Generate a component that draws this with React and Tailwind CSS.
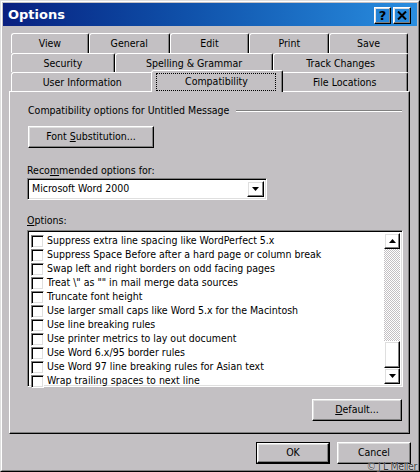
import React from 'react'

const raised =
  'border border-t-white border-l-white border-r-black border-b-black shadow-[inset_-1px_-1px_0_#808080,inset_1px_1px_0_#dfdfdf]'
const sunken =
  'border border-t-[#808080] border-l-[#808080] border-r-white border-b-white shadow-[inset_1px_1px_0_#000,inset_-1px_-1px_0_#dfdfdf]'

const row1 = [
  { label: 'View', w: 'w-[78px]' },
  { label: 'General', w: 'w-[81px]' },
  { label: 'Edit', w: 'w-[80px]' },
  { label: 'Print', w: 'w-[80px]' },
  { label: 'Save', w: 'w-[79px]' },
]
const row2 = [
  { label: 'Security', w: 'w-[104px]' },
  { label: 'Spelling & Grammar', w: 'w-[159px]' },
  { label: 'Track Changes', w: 'w-[135px]' },
]

const options = [
  'Suppress extra line spacing like WordPerfect 5.x',
  'Suppress Space Before after a hard page or column break',
  'Swap left and right borders on odd facing pages',
  'Treat \\" as "" in mail merge data sources',
  'Truncate font height',
  'Use larger small caps like Word 5.x for the Macintosh',
  'Use line breaking rules',
  'Use printer metrics to lay out document',
  'Use Word 6.x/95 border rules',
  'Use Word 97 line breaking rules for Asian text',
  'Wrap trailing spaces to next line',
]

function Tab({ label, w, className = 'h-full' }) {
  return (
    <div
      className={`${w} ${className} flex items-center justify-center pt-[1px] border-t border-l border-r border-t-white border-l-white border-r-black rounded-tl-[3px] rounded-tr-[2px] shadow-[inset_-1px_0_0_#808080]`}
    >
      {label}
    </div>
  )
}

function Arrow({ down }) {
  return (
    <svg width="7" height="4" viewBox="0 0 7 4">
      {down ? <path d="M0 0h7L3.5 4z" fill="#000" /> : <path d="M0 4h7L3.5 0z" fill="#000" />}
    </svg>
  )
}

function Button({ children, className }) {
  return <div className={`${raised} ${className} flex items-center justify-center`}>{children}</div>
}

export default function App() {
  return (
    <div className="relative w-[420px] h-[472px] bg-[#c3c0c3] font-['DejaVu_Sans_Condensed','DejaVu_Sans',sans-serif] [font-stretch:semi-condensed] text-[10.5px] text-black border border-t-[#dfdfdf] border-l-[#dfdfdf] border-r-black border-b-black">
      <div className="h-full border border-t-white border-l-white border-r-[#808080] border-b-[#808080] p-[1px] flex flex-col">
        {/* title bar */}
        <div className="h-[23px] shrink-0 flex items-center justify-between pl-[5px] pr-[6px] bg-gradient-to-r from-[#0a1f80] to-[#2a8ee0]">
          <span className="text-white font-bold text-[13px] font-['DejaVu_Sans',sans-serif] [font-stretch:normal] leading-none">Options</span>
          <div className="flex gap-[2px] mt-[1px]">
            <Button className="w-[17px] h-[17px]">
              <span className="font-['DejaVu_Sans',sans-serif] [font-stretch:normal] font-bold text-[13px] leading-none">?</span>
            </Button>
            <Button className="w-[18px] h-[17px]">
              <svg width="10" height="9" viewBox="0 0 10 9">
                <path d="M1 0.5L9 8.5M9 0.5L1 8.5" stroke="#000" strokeWidth="2" />
              </svg>
            </Button>
          </div>
        </div>

        {/* body */}
        <div className="flex flex-col pl-[6px] pr-[7px] pt-[7px]">
          <div className="flex flex-col mx-[2px]">
            <div className="h-[20px] flex">
              {row1.map((t) => (
                <Tab key={t.label} {...t} />
              ))}
            </div>
            <div className="h-[19px] flex">
              {row2.map((t) => (
                <Tab key={t.label} {...t} />
              ))}
            </div>
            <div className="h-[19px] flex items-end">
              <Tab label="User Information" w="w-[143px]" />
              <div className="relative z-10 w-[132px] h-[22px] -mx-[2px] -mb-[1px] shrink-0 bg-[#c3c0c3] flex border-t border-l border-r border-t-white border-l-white border-r-black rounded-tl-[3px] rounded-tr-[2px] shadow-[inset_-1px_0_0_#808080] pt-[2px] pl-[4px] pr-[6px] pb-[1px]">
                <div className="flex-1 flex items-center justify-center border border-dotted border-black">Compatibility</div>
              </div>
              <Tab label="File Locations" w="w-[127px]" />
            </div>
          </div>

          {/* panel */}
          <div className="h-[343px] flex flex-col border border-t-white border-l-white border-r-black border-b-black shadow-[inset_-1px_-1px_0_#808080] pl-[17px] pr-[7px]">
            <div className="mt-[12px] h-[13px] flex items-center ml-[1px]">
              <span className="whitespace-nowrap leading-[13px]">Compatibility options for Untitled Message</span>
              <div className="flex-1 ml-[7px] border-t border-t-[#808080] border-b border-b-white" />
            </div>

            <Button className="mt-[9px] ml-[1px] w-[126px] h-[22px]">
              <span>
                Font <span className="underline">S</span>ubstitution...
              </span>
            </Button>

            <div className="mt-[16px] leading-[13px]">
              Reco<span className="underline">m</span>mended options for:
            </div>

            <div className={`${sunken} mt-[1px] w-[240px] h-[22px] bg-white flex items-center p-[2px]`}>
              <span className="flex-1 pl-[2px]">Microsoft Word 2000</span>
              <Button className="w-[17px] h-full">
                <Arrow down />
              </Button>
            </div>

            <div className="mt-[14px] leading-[13px]">
              <span className="underline">O</span>ptions:
            </div>

            <div className={`${sunken} mt-[3px] w-[376px] h-[157px] bg-white flex p-[2px]`}>
              <div className="flex-1 flex flex-col pt-[1px]">
                {options.map((o) => (
                  <div key={o} className="h-[14px] flex items-center">
                    <div className="ml-[1px] w-[13px] h-[13px] shrink-0 border border-t-[#808080] border-l-[#808080] border-r-white border-b-white shadow-[inset_1px_1px_0_#000,inset_-1px_-1px_0_#dfdfdf] bg-white" />
                    <span className="ml-[3px] whitespace-nowrap">{o}</span>
                  </div>
                ))}
              </div>
              <div className="w-[16px] flex flex-col">
                <Button className="h-[16px] shrink-0">
                  <Arrow />
                </Button>
                <div className="flex-1 bg-[repeating-conic-gradient(#c3c0c3_0%_25%,#ffffff_0%_50%)] bg-size-[2px_2px]" />
                <Button className="h-[27px] shrink-0" />
                <Button className="h-[16px] shrink-0">
                  <Arrow down />
                </Button>
              </div>
            </div>

            <div className="flex justify-end mt-[12px]">
              <Button className="w-[90px] h-[22px]">
                <span>
                  <span className="underline">D</span>efault...
                </span>
              </Button>
            </div>
          </div>

          {/* footer buttons */}
          <div className="flex justify-end gap-[7px] mt-[8px] mr-[-1px]">
            <div className="border border-black">
              <Button className="w-[72px] h-[20px]">OK</Button>
            </div>
            <Button className="w-[74px] h-[22px]">Cancel</Button>
          </div>
        </div>
      </div>

      <span className="absolute right-[2px] bottom-[0px] text-[10.5px] tracking-[-0.4px] leading-none text-[#3a3a3a] [text-shadow:0_0_1px_#fff] whitespace-nowrap">
        © J L Meller
      </span>
    </div>
  )
}
